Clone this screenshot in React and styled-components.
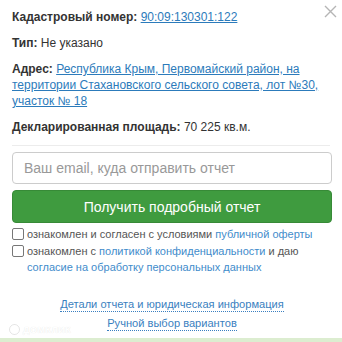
import styled, { createGlobalStyle } from 'styled-components';

const GlobalStyle = createGlobalStyle`
  html, body {
    margin: 0;
    padding: 0;
    background: #dcedd0;
    font-family: "Liberation Sans", Arial, sans-serif;
  }
`;

const Popup = styled.div`
  position: relative;
  box-sizing: border-box;
  width: 342px;
  height: 338px;
  background: #fff;
  padding: 9px 10px 0 12px;
  color: #333;
  font-size: 12px;
`;

const Close = styled.button`
  position: absolute;
  top: 5px;
  right: 5px;
  width: 13px;
  height: 13px;
  padding: 0;
  border: 0;
  background: none;
  cursor: pointer;
`;

const Fields = styled.div`
  display: flex;
  flex-direction: column;
  gap: 10px;
  line-height: 16px;
`;

const Field = styled.div``;

const Label = styled.b`
  font-weight: bold;
  color: #333;
`;

const Link = styled.a`
  color: #2c7bbb;
  text-decoration: underline;
`;

const Divider = styled.hr`
  margin: 10px 0 6px;
  border: 0;
  border-top: 1px solid #ececec;
  width: 318px;
`;

const Input = styled.input`
  display: block;
  box-sizing: border-box;
  width: 320px;
  height: 32px;
  padding: 0 11px;
  border: 1px solid #ccc;
  border-radius: 4px;
  font-family: inherit;
  font-size: 14px;
  color: #333;
  outline: none;

  &::placeholder {
    color: #999;
  }
`;

const Submit = styled.button`
  display: block;
  box-sizing: border-box;
  width: 320px;
  height: 33px;
  margin-top: 6px;
  border: 1px solid #378a37;
  border-radius: 4px;
  background: #3f9b3f;
  color: #fff;
  font-family: inherit;
  font-size: 14px;
  cursor: pointer;
`;

const Agreements = styled.div`
  margin-top: 3px;
  font-size: 11px;
  line-height: 16.5px;
  color: #555;
`;

const Agree = styled.label`
  display: flex;
  align-items: flex-start;
  gap: 3px;
`;

const Box = styled.span`
  flex: none;
  box-sizing: border-box;
  width: 12px;
  height: 12px;
  margin-top: 2px;
  border: 1px solid #777;
  border-radius: 2px;
  background: #fff;
`;

const SoftLink = styled.a`
  color: #3f8ccb;
  text-decoration: none;
`;

const Footer = styled.div`
  display: flex;
  flex-direction: column;
  align-items: center;
  gap: 4px;
  margin-top: 21px;
  font-size: 11.1px;
  line-height: 14px;
`;

const DottedLink = styled.a`
  color: #3a7fc0;
  text-decoration: none;
  border-bottom: 1px dotted #3a7fc0;
`;

const Watermark = styled.div`
  position: absolute;
  left: 9px;
  bottom: 3px;
  display: flex;
  align-items: center;
  gap: 3px;
  font-size: 9px;
  font-weight: bold;
  letter-spacing: 0.5px;
  color: #fff;
  text-shadow: 0 0 1px rgba(0, 0, 0, 0.12);
  pointer-events: none;
`;

export default function App() {
  return (
    <>
      <GlobalStyle />
      <Popup>
        <Close aria-label='Закрыть'>
          <svg width='13' height='13' viewBox='0 0 13 13'>
            <path d='M1 1L12 12M12 1L1 12' stroke='#b5b5b5' strokeWidth='1.4' />
          </svg>
        </Close>
        <Fields>
          <Field>
            <Label>Кадастровый номер:</Label> <Link href='#'>90:09:130301:122</Link>
          </Field>
          <Field>
            <Label>Тип:</Label> Не указано
          </Field>
          <Field>
            <Label>Адрес:</Label>{' '}
            <Link href='#'>
              Республика Крым, Первомайский район, на территории Стахановского
              сельского совета, лот №30, участок № 18
            </Link>
          </Field>
          <Field>
            <Label>Декларированная площадь:</Label> 70 225 кв.м.
          </Field>
        </Fields>
        <Divider />
        <Input placeholder='Ваш email, куда отправить отчет' />
        <Submit>Получить подробный отчет</Submit>
        <Agreements>
          <Agree>
            <Box />
            <span>
              ознакомлен и согласен с условиями <SoftLink href='#'>публичной оферты</SoftLink>
            </span>
          </Agree>
          <Agree>
            <Box />
            <span>
              ознакомлен с <SoftLink href='#'>политикой конфиденциальности</SoftLink> и даю{' '}
              <SoftLink href='#'>согласие на обработку персональных данных</SoftLink>
            </span>
          </Agree>
        </Agreements>
        <Footer>
          <DottedLink href='#'>Детали отчета и юридическая информация</DottedLink>
          <DottedLink href='#'>Ручной выбор вариантов</DottedLink>
        </Footer>
        <Watermark>
          <svg width='11' height='11' viewBox='0 0 11 11'>
            <circle cx='5.5' cy='5.5' r='5' fill='#fff' stroke='rgba(0,0,0,0.1)' />
          </svg>
          ДОМКЛИК
        </Watermark>
      </Popup>
    </>
  );
}
